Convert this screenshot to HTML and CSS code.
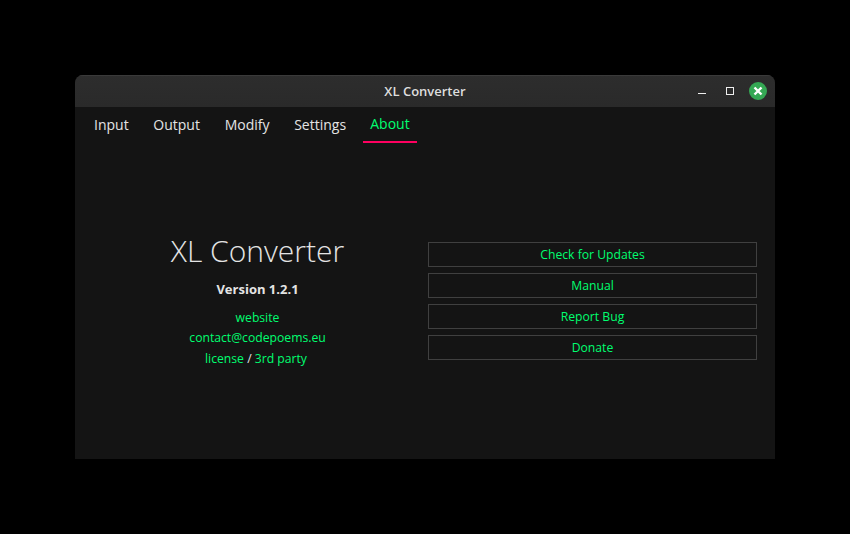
FILE: index.html
```html
<!DOCTYPE html>
<html lang="en">
<head>
<meta charset="utf-8">
<title>XL Converter</title>
<link rel="stylesheet" href="styles.css">
</head>
<body>
<main class="window">
  <header class="titlebar">
    <span></span>
    <h1 class="title">XL Converter</h1>
    <div class="controls">
      <svg width="76" height="20" viewBox="0 0 76 20">
        <path d="M5 12.5h8" stroke="#eee"/>
        <rect x="33.5" y="6.5" width="7" height="7" fill="none" stroke="#eee"/>
        <circle cx="65" cy="10" r="9" fill="#35a854"/>
        <path d="M61.5 6.5l7 7m0-7l-7 7" stroke="#fff" stroke-width="2.4"/>
      </svg>
    </div>
  </header>
  <nav class="tabs">
    <a class="tab">Input</a>
    <a class="tab">Output</a>
    <a class="tab">Modify</a>
    <a class="tab">Settings</a>
    <a class="tab active">About</a>
  </nav>
  <div class="content">
    <section class="info">
      <h2 class="name">XL Converter</h2>
      <p class="version">Version 1.2.1</p>
      <p class="links"><a>website</a></p>
      <p class="links"><a>contact@codepoems.eu</a></p>
      <p class="links last"><a>license</a> / <a>3rd party</a></p>
    </section>
    <section class="actions">
      <button class="action">Check for Updates</button>
      <button class="action">Manual</button>
      <button class="action">Report Bug</button>
      <button class="action">Donate</button>
    </section>
  </div>
</main>
</body>
</html>
```

FILE: styles.css
```css
* { box-sizing: border-box; }
body {
  margin: 0;
  height: 534px;
  padding: 75px;
  background: #000;
  color: #e4e4e4;
  font-family: "Open Sans", "Noto Sans", sans-serif;
}
.window {
  width: 700px;
  height: 384px;
  background: #141414;
  border-radius: 8px 8px 0 0;
  overflow: hidden;
}
.titlebar {
  display: grid;
  grid-template-columns: 1fr auto 1fr;
  align-items: center;
  height: 32px;
  background: linear-gradient(#2d2d2d, #2a2a2a);
  box-shadow: inset 0 1px #3a3a3a;
}
.title { margin: 0; font-size: 13px; line-height: 18px; font-weight: 650; color: #dedede; }
.controls { display: flex; justify-content: flex-end; padding-right: 6px; }
.tabs { display: flex; gap: 10.7px; padding-left: 12px; height: 37px; }
.tab {
  padding: 8px 7px 0;
  height: 36px;
  font-size: 14px;
  line-height: 20px;
}
.active {
  width: 54px;
  margin-left: -1px;
  padding: 7px 0 0 7.5px;
  color: #00ff70;
  border-bottom: 2px solid #ff0060;
}
.content { display: flex; padding-top: 83px; }
.info { width: 329px; margin-left: 18px; text-align: center; }
.name { margin: 0; font-size: 30px; font-weight: 300; line-height: 48px; }
.version { margin: 4px 0 8px; font-size: 13px; line-height: 20px; font-weight: 700; }
.links { margin: 0; font-size: 12.18px; line-height: 20px; }
.version + .links { margin-top: 9px; }
.last { margin-top: 1px; padding-right: 3px; }
.links a { color: #00ff70; }
.actions { display: flex; flex-direction: column; gap: 6px; width: 329px; margin-left: 6px; padding-top: 15px; }
.action {
  height: 25px;
  padding: 0;
  border: 1px solid #404040;
  background: none;
  color: #00ff70;
  font: 12.18px/20px "Open Sans", sans-serif;
}
```
